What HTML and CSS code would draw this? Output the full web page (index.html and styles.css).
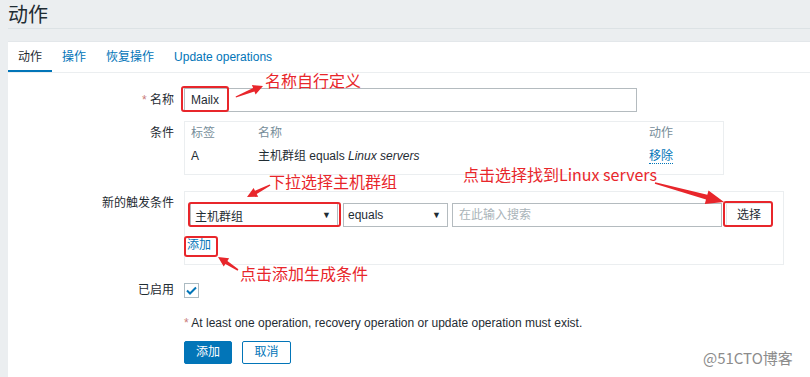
FILE: index.html
```html
<!DOCTYPE html>
<html lang="zh-CN">
<head>
<meta charset="utf-8">
<title>动作</title>
<link rel="stylesheet" href="styles.css">
</head>
<body>
<header class="page-header"><h1>动作</h1></header>
<main class="panel">
  <nav class="tabs">
    <span class="tab active">动作</span>
    <span class="tab">操作</span>
    <span class="tab">恢复操作</span>
    <span class="tab">Update operations</span>
  </nav>
  <div class="form">
    <div class="row row-name">
      <div class="lbl"><span class="ast">*</span> 名称</div>
      <div class="field"><div class="textbox name-box">Mailx</div></div>
    </div>
    <div class="row row-cond">
      <div class="lbl">条件</div>
      <div class="field">
        <div class="cond-table">
          <div class="tr th"><span class="c1">标签</span><span class="c2">名称</span><span class="c3">动作</span></div>
          <div class="tr"><span class="c1">A</span><span class="c2">主机群组 equals <i>Linux servers</i></span><span class="c3"><span class="link dotted">移除</span></span></div>
        </div>
      </div>
    </div>
    <div class="row row-new">
      <div class="lbl">新的触发条件</div>
      <div class="field">
        <div class="new-box">
          <div class="controls">
            <div class="select sel1"><span>主机群组</span><span class="caret">▼</span></div>
            <div class="select sel2"><span>equals</span><span class="caret">▼</span></div>
            <div class="textbox search"><span class="ph">在此输入搜索</span></div>
            <div class="btn-plain">选择</div>
          </div>
          <span class="link add-link">添加</span>
        </div>
      </div>
    </div>
    <div class="row row-enabled">
      <div class="lbl">已启用</div>
      <div class="field">
        <span class="checkbox"><svg width="11" height="9" viewBox="0 0 11 9"><path d="M1 4.5 L4 7.5 L10 1.5" fill="none" stroke="#0275b8" stroke-width="2"/></svg></span>
      </div>
    </div>
    <div class="row row-note">
      <div class="lbl"></div>
      <div class="field note"><span class="ast">*</span> At least one operation, recovery operation or update operation must exist.</div>
    </div>
    <div class="row row-buttons">
      <div class="lbl"></div>
      <div class="field buttons">
        <span class="btn-primary">添加</span>
        <span class="btn-alt">取消</span>
      </div>
    </div>
  </div>
</main>

<div class="overlay">
  <span class="note-red n1">名称自行定义</span>
  <span class="note-red n2">下拉选择主机群组</span>
  <span class="note-red n3">点击选择找到Linux servers</span>
  <span class="note-red n4">点击添加生成条件</span>
  <span class="redbox b1"></span>
  <span class="redbox b2"></span>
  <span class="redbox b3"></span>
  <span class="redbox b4"></span>
  <svg class="arrows" width="810" height="377" viewBox="0 0 810 377">
    <polygon fill="#e8262b" points="236,97.5 254.4,91.4 255.6,94.4 263,86 251.9,85.1 253.1,88.1 235.6,96.5"/>
    <polygon fill="#e8262b" points="270.5,185.6 256.7,194 258.2,196.8 247,197 253.6,187.9 255,190.8 269.6,184.4"/>
    <polygon fill="#e8262b" points="655.2,182.2 707.3,194.8 708.5,190.5 724,202 704.8,204 706,199.6 654.8,183.8"/>
    <polygon fill="#e8262b" points="238.4,269.3 227.4,260.9 229.1,258.3 218,257 223.7,266.6 225.4,264 237.6,270.7"/>
  </svg>
</div>
<div class="watermark">@51CTO博客</div>
</body>
</html>
```

FILE: styles.css
```css
* { box-sizing: border-box; }
html, body { margin: 0; padding: 0; }
body {
  background: #ebeef0;
  font-family: "Liberation Sans", Arial, "Noto Sans CJK SC", sans-serif;
  font-size: 12px;
  color: #1f2c33;
  width: 810px;
  height: 377px;
  overflow: hidden;
  position: relative;
}
.page-header {
  height: 29px;
  border-bottom: 1px solid #dce2e5;
  margin: 0 0 0 8px;
}
.page-header h1 {
  margin: 0;
  font-size: 20px;
  font-weight: normal;
  line-height: 28px;
  height: 28px;
  color: #1f2c33;
  font-family: "Noto Sans CJK SC", sans-serif;
}
.panel {
  margin: 12px 0 0 8px;
  background: #fff;
  border-top: 1px solid #e3e7ea;
  height: 340px;
}
.tabs {
  display: flex;
  height: 31px;
  border-bottom: 1px solid #ebeef0;
}
.tab {
  padding: 0 10px;
  line-height: 30px;
  color: #0275b8;
  font-family: "Liberation Sans", "Noto Sans CJK SC", sans-serif;
  border-bottom: 2px solid transparent;
}
.tab.active {
  color: #1f2c33;
  border-bottom-color: #0275b8;
}
.form { padding-top: 15px; }
.row {
  display: grid;
  grid-template-columns: 166px 1fr;
  column-gap: 10px;
}
.lbl {
  text-align: right;
  line-height: 24px;
  color: #1f2c33;
  white-space: nowrap;
}
.ast { color: #c97a7a; }
.textbox {
  height: 24px;
  border: 1px solid #b4bbbf;
  background: #fff;
  padding: 0 6px;
  line-height: 22px;
}
.name-box { width: 453px; }
.row-cond { margin-top: 9px; }
.cond-table {
  width: 540px;
  border: 1px solid #ebeef0;
  padding: 0 6px 6px;
}
.tr { display: flex; height: 23px; line-height: 23px; }
.th { color: #768d99; }
.c1 { width: 67px; }
.c2 { width: 391px; }
.link { color: #0275b8; }
.dotted { border-bottom: 1px dotted #0275b8; }
.row-new { margin-top: 16px; }
.new-box {
  width: 600px;
  height: 74px;
  border: 1px solid #ebeef0;
  padding: 11px 5px 0;
}
.controls { display: flex; gap: 4px; height: 24px; }
.select {
  height: 24px;
  border: 1px solid #b4bbbf;
  display: flex;
  justify-content: space-between;
  align-items: center;
  padding: 0 6px 0 4px;
}
.sel1 { width: 148px; margin-right: 1px; }
.sel2 { width: 105px; }
.caret { font-size: 9px; color: #1f2c33; }
.search { width: 270px; }
.ph { color: #aab4b9; }
.btn-plain {
  width: 46px;
  height: 24px;
  line-height: 22px;
  text-align: center;
  border: 1px solid #e3e7ea;
  background: #fff;
}
.add-link {
  display: inline-block;
  margin-top: 10px;
  margin-left: -3px;
  line-height: 16px;
}
.row-enabled { margin-top: 13px; }
.row-enabled .field { display: flex; align-items: center; }
.checkbox {
  width: 15px;
  height: 15px;
  border: 1px solid #acbbc2;
  display: flex;
  align-items: center;
  justify-content: center;
}
.row-note { margin-top: 9px; }
.note { line-height: 24px; }
.row-buttons { margin-top: 6px; }
.buttons { display: flex; gap: 10px; }
.btn-primary, .btn-alt {
  height: 23px;
  line-height: 21px;
  padding: 0 11px;
  border: 1px solid #0275b8;
  border-radius: 2px;
}
.btn-primary { background: #0275b8; color: #fff; }
.btn-alt { background: #fff; color: #0275b8; width: 49px; text-align: center; }

.overlay { position: absolute; left: 0; top: 0; width: 810px; height: 377px; pointer-events: none; }
.arrows { position: absolute; left: 0; top: 0; }
.note-red {
  position: absolute;
  color: #e8262b;
  font-family: "Noto Sans CJK SC", sans-serif;
  font-size: 16px;
  line-height: 20px;
  white-space: nowrap;
}
.n1 { left: 265px; top: 70px; }
.n2 { left: 269px; top: 171px; }
.n3 { left: 463px; top: 164px; }
.n4 { left: 240px; top: 263px; }
.redbox {
  position: absolute;
  border: 2.5px solid #e8262b;
  border-radius: 3px;
}
.b1 { left: 181px; top: 86px; width: 48px; height: 26px; }
.b2 { left: 188px; top: 202px; width: 153px; height: 25px; }
.b3 { left: 723px; top: 201px; width: 50px; height: 26px; }
.b4 { left: 184px; top: 236px; width: 34px; height: 21px; }
.watermark {
  position: absolute;
  left: 703px;
  top: 348px;
  font-family: "Noto Sans CJK SC", sans-serif;
  font-size: 15px;
  line-height: 20px;
  color: #8c8c8c;
}
```
